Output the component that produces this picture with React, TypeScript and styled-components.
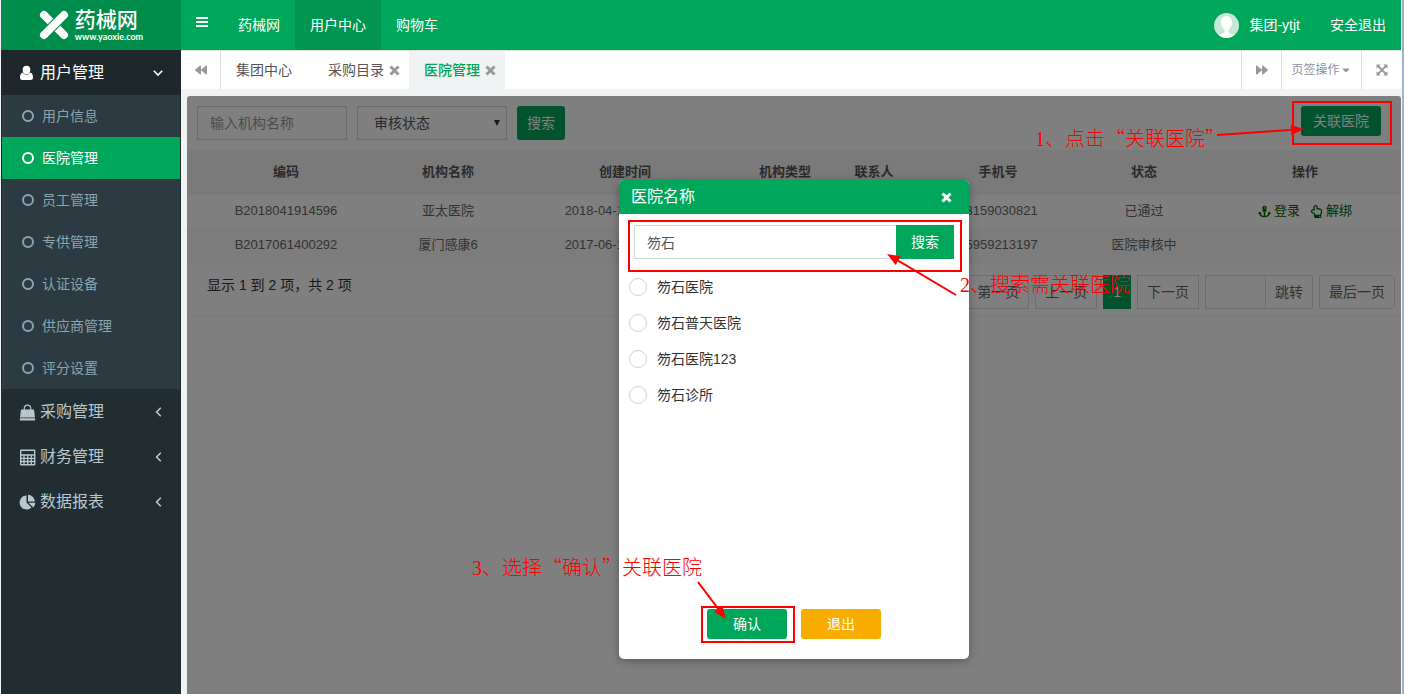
import React from 'react';
import styled, { createGlobalStyle } from 'styled-components';
import { FaAnchor, FaRegHandPointUp, FaBackward, FaForward, FaCaretDown } from 'react-icons/fa';

const GREEN = '#00a65a';
const RED = '#ff0000';

const Global = createGlobalStyle`
  *, *::before, *::after { box-sizing: border-box; }
  html, body, #root { height: 100%; }
  body {
    margin: 0;
    background: #eff3f4;
    color: #333;
    font: 14px/20px "Liberation Sans", "Noto Sans CJK SC", sans-serif;
  }
  button, input, select { font: inherit; color: inherit; margin: 0; }
  button { border: 0; padding: 0; background: none; cursor: pointer; white-space: nowrap; }
  a { color: inherit; text-decoration: none; }
  ul { list-style: none; margin: 0; padding: 0; }
`;

const Page = styled.div`
  display: flex;
  min-height: 100%;
  border-left: 1px solid #eff3f4;
  border-right: 2px solid #9fb3c6;
`;

const Sidebar = styled.aside`
  flex: 0 0 180px;
  background: #222d32;
`;

const Logo = styled.a`
  display: flex;
  align-items: center;
  justify-content: center;
  gap: 6px;
  height: 50px;
  background: #008d4c;
  color: #fff;
`;

const LogoText = styled.span`
  display: flex;
  flex-direction: column;
  gap: 1px;
`;

const LogoName = styled.span`
  font-size: 21px;
  line-height: 22px;
  font-weight: 500;
`;

const LogoUrl = styled.span`
  font: 700 9px/9px Lato, sans-serif;
`;

const GroupButton = styled.button<{ $open?: boolean }>`
  display: flex;
  align-items: center;
  width: 100%;
  height: 45px;
  padding: 1px 18px 0;
  gap: 4px;
  font-size: 16px;
  text-align: left;
  color: ${p => (p.$open ? '#fff' : '#b8c7ce')};
  background: ${p => (p.$open ? '#1e282c' : 'transparent')};
  span { flex: 1; }
`;

const SubMenu = styled.ul`
  margin: 0 1px;
  background: #2c3b41;
`;

const SubLink = styled.a<{ $active?: boolean }>`
  display: flex;
  align-items: center;
  gap: 8px;
  height: 42px;
  padding-left: 20px;
  color: ${p => (p.$active ? '#fff' : '#8aa4af')};
  background: ${p => (p.$active ? GREEN : 'transparent')};
  &::before {
    content: '';
    width: 12px;
    height: 12px;
    border: 2px solid currentColor;
    border-radius: 50%;
  }
`;

const Main = styled.div`
  flex: 1;
  min-width: 0;
  display: flex;
  flex-direction: column;
  border-right: 1px solid #f4f6f7;
`;

const TopBar = styled.header`
  display: flex;
  height: 50px;
  background: ${GREEN};
  color: #fff;
`;

const MenuToggle = styled.button`
  display: flex;
  width: 42px;
  padding: 17px 15px;
`;

const TopLink = styled.a<{ $active?: boolean }>`
  display: flex;
  align-items: center;
  gap: 10px;
  padding: 0 15px;
  white-space: nowrap;
  background: ${p => (p.$active ? '#009551' : 'transparent')};
`;

const Spacer = styled.div`
  flex: 1;
`;

const TabBar = styled.nav`
  display: flex;
  height: 39px;
  border-top: 1px solid #ddd;
  background: #fff;
  color: #999;
`;

const TabTool = styled.button<{ $side: 'left' | 'right'; $wide?: boolean }>`
  display: flex;
  align-items: center;
  justify-content: center;
  width: ${p => (p.$wide ? 80 : 40)}px;
  font-size: 12px;
  color: #8b95a1;
  border: 0 solid #ddd;
  border-${p => p.$side}-width: 1px;
  svg { color: #999; }
`;

const Tab = styled.div<{ $active?: boolean; $fixed?: boolean }>`
  display: flex;
  align-items: center;
  gap: 5px;
  padding: 0 ${p => (p.$fixed ? 21 : 9)}px 0 15px;
  color: ${p => (p.$active ? GREEN : '#555')};
  background: ${p => (p.$active ? '#eff3f4' : 'transparent')};
  font-weight: ${p => (p.$active ? 500 : 400)};
  white-space: nowrap;
`;

const TabClose = styled.button`
  display: flex;
  color: #999;
`;

const Panel = styled.main`
  position: relative;
  flex: 1;
  margin: 7px 0 0 6px;
  background: #fff;
  border-radius: 3px 3px 0 0;
  overflow: hidden;
`;

const Filters = styled.form`
  display: flex;
  gap: 10px;
  padding: 10px 20px 10px 10px;
`;

const TextInput = styled.input`
  width: 150px;
  height: 34px;
  padding: 0 12px;
  border: 1px solid #d2d6de;
  background: #fff;
  color: #555;
  outline: 0;
  &::placeholder { color: #999; opacity: 1; }
`;

const SelectBox = styled.div`
  display: grid;
  align-items: center;
  width: 150px;
  height: 34px;
  > * { grid-area: 1 / 1; }
  svg { justify-self: end; margin-right: 7px; pointer-events: none; }
`;

const Select = styled.select`
  appearance: none;
  width: 100%;
  height: 100%;
  padding: 0 16px;
  border: 1px solid #d2d6de;
  border-radius: 0;
  background: #fff;
  color: #555;
`;

const Button = styled.button<{ $tone?: string; $width: number; $height: number; $square?: boolean }>`
  width: ${p => p.$width}px;
  height: ${p => p.$height}px;
  border-radius: ${p => (p.$square ? 0 : 3)}px;
  background: ${p => p.$tone ?? GREEN};
  color: #fff;
`;

const DataTable = styled.table`
  width: 100%;
  table-layout: fixed;
  border-collapse: collapse;
  font-size: 13px;
  color: #666;
  text-align: center;
  th { height: 44px; padding: 0; background: #f5f5f5; color: #555; font-weight: 700; }
  td { height: 34px; padding: 0; border-top: 1px solid #f4f4f4; white-space: nowrap; }
  tbody tr:nth-child(even) { background: #f9f9f9; }
`;

const RowActions = styled.div`
  display: flex;
  justify-content: center;
  gap: 10px;
`;

const RowLink = styled.a`
  display: flex;
  align-items: center;
  gap: 3px;
  color: #006400;
`;

const TableFooter = styled.div`
  display: flex;
  justify-content: space-between;
  padding: 12px 6px 6px 20px;
  border-top: 1px solid #f4f4f4;
  border-bottom: 1px solid #f4f4f4;
`;

const Pager = styled.div`
  display: flex;
  gap: 6px;
  color: #666;
`;

const PageButton = styled.button<{ $current?: boolean; $last?: boolean }>`
  height: 34px;
  padding: 0 ${p => (p.$current ? 10 : 9)}px;
  border: ${p => (p.$current ? '0' : '1px solid #ddd')};
  border-radius: ${p => (p.$last ? '0 4px 4px 0' : '0')};
  background: ${p => (p.$current ? GREEN : '#fff')};
  color: ${p => (p.$current ? '#fff' : 'inherit')};
`;

const JumpGroup = styled.div`
  display: flex;
  input { width: 60px; height: 34px; border: 1px solid #ddd; border-right: 0; background: #fff; }
`;

const Backdrop = styled.div`
  position: absolute;
  inset: 0;
  display: flex;
  justify-content: center;
  align-items: flex-start;
  padding-top: 84px;
  background: rgba(0, 0, 0, 0.5);
`;

const Modal = styled.section`
  position: relative;
  display: flex;
  flex-direction: column;
  width: 350px;
  height: 479px;
  border-radius: 5px;
  background: #fff;
  box-shadow: 0 2px 10px rgba(0, 0, 0, 0.3);
`;

const ModalHeader = styled.header`
  display: flex;
  align-items: center;
  justify-content: space-between;
  height: 34px;
  padding: 0 17px 0 12px;
  border-radius: 5px 5px 0 0;
  background: ${GREEN};
  color: #fff;
  h2 { margin: 0; font-size: 16px; font-weight: 400; }
  button { display: flex; }
`;

const ModalSearch = styled.form`
  position: relative;
  display: flex;
  padding: 11px 15px 0;
  ${TextInput} { flex: 1; width: auto; min-width: 0; border-right: 0; }
`;

const Options = styled.div`
  display: flex;
  flex-direction: column;
  gap: 16px;
  flex: 1;
  padding: 18px 10px;
`;

const Option = styled.label`
  display: flex;
  align-items: center;
  gap: 10px;
  color: #333;
`;

const Radio = styled.input`
  appearance: none;
  width: 18px;
  height: 18px;
  border: 1px solid #d2d2d2;
  border-radius: 50%;
  background: #fff;
  &:checked { border: 5px solid ${GREEN}; }
`;

const ModalActions = styled.div`
  display: flex;
  justify-content: center;
  gap: 14px;
  padding-bottom: 20px;
`;

const Marked = styled.div`
  position: relative;
  display: flex;
`;

const Frame = styled.div`
  position: absolute;
  border: 2px solid ${RED};
  pointer-events: none;
`;

const LinkFrame = styled(Frame)`
  top: 5px;
  right: 9px;
  width: 100px;
  height: 44px;
`;

const SearchFrame = styled(Frame)`
  inset: 6px 7px -13px 9px;
`;

const ConfirmFrame = styled(Frame)`
  inset: -3px -8px -4px -6px;
`;

const Note = styled.p`
  position: absolute;
  margin: 0;
  font: 300 20px/24px "Noto Sans CJK SC", sans-serif;
  color: ${RED};
  white-space: nowrap;
  pointer-events: none;
  span { font-family: "Liberation Serif", serif; }
`;

const LinkNote = styled(Note)`
  top: 30px;
  right: 176px;
`;

const SearchNote = styled(Note)`
  top: 92px;
  left: 341px;
`;

const ConfirmNote = styled(Note)`
  top: 375px;
  left: -147px;
`;

const ArrowSvg = styled.svg<{ $top: number; $left?: number; $right?: number }>`
  position: absolute;
  top: ${p => p.$top}px;
  left: ${p => (p.$left === undefined ? 'auto' : `${p.$left}px`)};
  right: ${p => (p.$right === undefined ? 'auto' : `${p.$right}px`)};
  pointer-events: none;
`;

type ArrowProps = {
  width: number; height: number; from: [number, number]; to: [number, number];
  top: number; left?: number; right?: number;
};

function Arrow({ width, height, from, to, top, left, right }: ArrowProps) {
  const angle = Math.atan2(to[1] - from[1], to[0] - from[0]);
  const at = (along: number, across: number): [number, number] => [
    to[0] - along * Math.cos(angle) - across * Math.sin(angle),
    to[1] - along * Math.sin(angle) + across * Math.cos(angle),
  ];
  const tail = at(10, 0);
  return (
    <ArrowSvg width={width} height={height} $top={top} $left={left} $right={right} aria-hidden="true">
      <line x1={from[0]} y1={from[1]} x2={tail[0]} y2={tail[1]} stroke={RED} strokeWidth="2" />
      <polygon points={[to, at(13, 5), at(13, -5)].join(' ')} fill={RED} />
    </ArrowSvg>
  );
}

const UserIcon = () => (
  <svg width="17" height="16" viewBox="0 0 17 16" fill="currentColor" aria-hidden="true">
    <ellipse cx="7.500" cy="5" rx="3.800" ry="4.200" />
    <path d="M3.800 7.500C1.800 8 1 10 1 12.500 1 14.200 2 15 3.500 15h8c1.500 0 2.500-.8 2.500-2.500 0-2.500-.8-4.500-2.800-5-1 1.500-2.200 2.200-3.700 2.200S4.800 9 3.800 7.500Z" />
  </svg>
);

const BagIcon = () => (
  <svg width="17" height="17" viewBox="0 0 17 17" fill="currentColor" aria-hidden="true">
    <path d="M2 5.500h13l1 8H1Z" />
    <path d="M1 14.300h15l.2 1.200c.1.600-.3 1-.9 1H1.700c-.6 0-1-.4-.9-1Z" />
    <path d="M5.300 7.500V4.300a3.200 3.200 0 0 1 6.400 0v3.200" fill="none" stroke="currentColor" strokeWidth="1.200" />
  </svg>
);

const CalculatorIcon = () => (
  <svg width="17" height="17" viewBox="0 0 17 17" fill="none" stroke="currentColor" aria-hidden="true">
    <rect x="1.700" y="1.200" width="14" height="14.600" rx="0.500" strokeWidth="1.400" />
    <path d="M2 6h13.500M2 9.300h13.500M2 12.500h13.500M5 6v9.500M8.700 6v9.500M12.300 6v9.500" strokeWidth="1.300" />
  </svg>
);

const PieIcon = () => (
  <svg width="17" height="17" viewBox="0 0 17 17" fill="currentColor" aria-hidden="true">
    <path d="M7.500 1.500v7l5 5A7 7 0 1 1 7.500 1.500Z" />
    <path d="M9 .8A7.200 7.200 0 0 1 15.800 7.500H9Z" />
    <path d="M9.500 8.800h6.800a7 7 0 0 1-2 4.700Z" />
  </svg>
);

const Chevron = ({ down }: { down?: boolean }) => (
  <svg width="10" height="10" viewBox="0 0 10 10" fill="none" stroke="currentColor" strokeWidth="1.600" aria-hidden="true">
    <path d={down ? 'M0.800 2.800 5 7l4.200-4.200' : 'M7.800 0.800 3.600 5l4.200 4.200'} />
  </svg>
);

const CrossIcon = () => (
  <svg width="11" height="11" viewBox="0 0 11 11" fill="none" stroke="currentColor" strokeWidth="3" aria-hidden="true">
    <path d="M1.500 1.500l8 8M9.500 1.500l-8 8" />
  </svg>
);

const ExpandIcon = () => (
  <svg width="12" height="12" viewBox="0 0 12 12" fill="currentColor" aria-hidden="true">
    <path d="M0.500 0.500h4.200L0.500 4.700ZM11.500 0.500v4.200L7.300 0.500ZM0.500 11.500V7.300l4.200 4.200ZM11.500 11.500H7.300l4.200-4.200Z" />
    <path d="M2 2l8 8M10 2l-8 8" stroke="currentColor" strokeWidth="1.800" />
  </svg>
);

const subItems = ['用户信息', '医院管理', '员工管理', '专供管理', '认证设备', '供应商管理', '评分设置'];
const groups = [
  { name: '采购管理', Icon: BagIcon },
  { name: '财务管理', Icon: CalculatorIcon },
  { name: '数据报表', Icon: PieIcon },
];
const columns: [string, number][] = [
  ['编码', 198], ['机构名称', 126], ['创建时间', 228], ['机构类型', 92],
  ['联系人', 86], ['手机号', 162], ['状态', 130], ['操作', 192],
];
const rows = [
  { code: 'B2018041914596', name: '亚太医院', date: '2018-04-19 14:59:12', phone: '13159030821', state: '已通过', actions: true },
  { code: 'B2017061400292', name: '厦门感康6', date: '2017-06-14 10:02:36', phone: '15959213197', state: '医院审核中', actions: false },
];
const hospitals = ['笏石医院', '笏石普天医院', '笏石医院123', '笏石诊所'];

export default function App() {
  return (
    <>
      <Global />
      <Page lang="zh-CN">
        <Sidebar>
          <Logo href="#">
            <svg width="30" height="30" viewBox="0 0 30 30" aria-hidden="true" fill="none" stroke="#fff" strokeLinecap="round">
              <path d="M5 5 25 25" strokeWidth="8" />
              <path d="M5 25 25 5" strokeWidth="10" stroke="#008d4c" strokeLinecap="butt" />
              <path d="M5 25 25 5" strokeWidth="8" />
            </svg>
            <LogoText>
              <LogoName>药械网</LogoName>
              <LogoUrl>www.yaoxie.com</LogoUrl>
            </LogoText>
          </Logo>
          <GroupButton $open>
            <UserIcon />
            <span>用户管理</span>
            <Chevron down />
          </GroupButton>
          <SubMenu>
            {subItems.map(item => (
              <li key={item}><SubLink href="#" $active={item === '医院管理'}>{item}</SubLink></li>
            ))}
          </SubMenu>
          {groups.map(({ name, Icon }) => (
            <GroupButton key={name}>
              <Icon />
              <span>{name}</span>
              <Chevron />
            </GroupButton>
          ))}
        </Sidebar>

        <Main>
          <TopBar>
            <MenuToggle aria-label="菜单">
              <svg width="13" height="10" fill="#fff">
                <rect width="13" height="2" />
                <rect y="4" width="13" height="2" />
                <rect y="8" width="13" height="2" />
              </svg>
            </MenuToggle>
            <TopLink href="#">药械网</TopLink>
            <TopLink href="#" $active>用户中心</TopLink>
            <TopLink href="#">购物车</TopLink>
            <Spacer />
            <TopLink href="#">
              <svg width="25" height="25" viewBox="0 0 25 25" aria-hidden="true">
                <clipPath id="avatar"><circle cx="12.5" cy="12.5" r="12.5" /></clipPath>
                <g clipPath="url(#avatar)">
                  <rect width="25" height="25" fill="#c7e8d8" />
                  <path d="M12.500 3C8.500 3 7 6 7 9.500c0 3 1.500 5.500 3.500 7V19c-1 2-5 2.500-7 4v3h18v-3c-2-1.500-6-2-7-4v-2.500c2-1.500 3.500-4 3.500-7C18 6 16.500 3 12.500 3Z" fill="#fff" />
                </g>
              </svg>
              集团-ytjt
            </TopLink>
            <TopLink href="#">安全退出</TopLink>
          </TopBar>

          <TabBar>
            <TabTool $side="right" aria-label="向左"><FaBackward size={12} /></TabTool>
            <Tab $fixed>集团中心</Tab>
            <Tab>采购目录<TabClose aria-label="关闭"><CrossIcon /></TabClose></Tab>
            <Tab $active>医院管理<TabClose aria-label="关闭"><CrossIcon /></TabClose></Tab>
            <Spacer />
            <TabTool $side="left" aria-label="向右"><FaForward size={12} /></TabTool>
            <TabTool $side="left" $wide>页签操作<FaCaretDown size={12} /></TabTool>
            <TabTool $side="left" aria-label="全屏"><ExpandIcon /></TabTool>
          </TabBar>

          <Panel>
            <Filters onSubmit={e => e.preventDefault()}>
              <TextInput placeholder="输入机构名称" aria-label="输入机构名称" />
              <SelectBox>
                <Select aria-label="审核状态"><option>审核状态</option></Select>
                <svg width="6" height="6" aria-hidden="true"><path d="M0 0h6L3 6Z" fill="#333" /></svg>
              </SelectBox>
              <Button $width={48} $height={34}>搜索</Button>
              <Spacer />
              <Button type="button" $width={80} $height={30}>关联医院</Button>
            </Filters>
            <DataTable>
              <colgroup>{columns.map(([name, width]) => <col key={name} width={width} />)}</colgroup>
              <thead><tr>{columns.map(([name]) => <th key={name}>{name}</th>)}</tr></thead>
              <tbody>
                {rows.map(row => (
                  <tr key={row.code}>
                    <td>{row.code}</td><td>{row.name}</td><td>{row.date}</td><td /><td />
                    <td>{row.phone}</td><td>{row.state}</td>
                    <td>
                      {row.actions && (
                        <RowActions>
                          <RowLink href="#"><FaAnchor size={13} />登录</RowLink>
                          <RowLink href="#"><FaRegHandPointUp size={13} />解绑</RowLink>
                        </RowActions>
                      )}
                    </td>
                  </tr>
                ))}
              </tbody>
            </DataTable>
            <TableFooter>
              <span>显示 1 到 2 项，共 2 项</span>
              <Pager>
                <PageButton>第一页</PageButton>
                <PageButton>上一页</PageButton>
                <PageButton $current>1</PageButton>
                <PageButton>下一页</PageButton>
                <JumpGroup>
                  <input aria-label="页码" />
                  <PageButton>跳转</PageButton>
                </JumpGroup>
                <PageButton $last>最后一页</PageButton>
              </Pager>
            </TableFooter>

            <Backdrop>
              <LinkFrame />
              <LinkNote><span>1</span>、点击“关联医院”</LinkNote>
              <Arrow width={92} height={16} from={[2, 10]} to={[89, 4]} top={29} right={94} />
              <Modal role="dialog" aria-labelledby="hospital-title">
                <ModalHeader>
                  <h2 id="hospital-title">医院名称</h2>
                  <button aria-label="关闭"><CrossIcon /></button>
                </ModalHeader>
                <ModalSearch onSubmit={e => e.preventDefault()}>
                  <TextInput defaultValue="笏石" aria-label="医院名称" />
                  <Button $width={58} $height={34} $square>搜索</Button>
                  <SearchFrame />
                </ModalSearch>
                <Options>
                  {hospitals.map(name => (
                    <Option key={name}><Radio type="radio" name="hospital" />{name}</Option>
                  ))}
                </Options>
                <ModalActions>
                  <Marked>
                    <Button $width={80} $height={30}>确认</Button>
                    <ConfirmFrame />
                  </Marked>
                  <Button $width={80} $height={30} $tone="#f9ad00">退出</Button>
                </ModalActions>
                <SearchNote><span>2</span>、搜索需关联医院</SearchNote>
                <Arrow width={74} height={48} from={[71, 43]} to={[2, 2]} top={72} left={266} />
                <ConfirmNote><span>3</span>、选择“确认”关联医院</ConfirmNote>
                <Arrow width={34} height={42} from={[2, 2]} to={[30, 39]} top={400} left={77} />
              </Modal>
            </Backdrop>
          </Panel>
        </Main>
      </Page>
    </>
  );
}
